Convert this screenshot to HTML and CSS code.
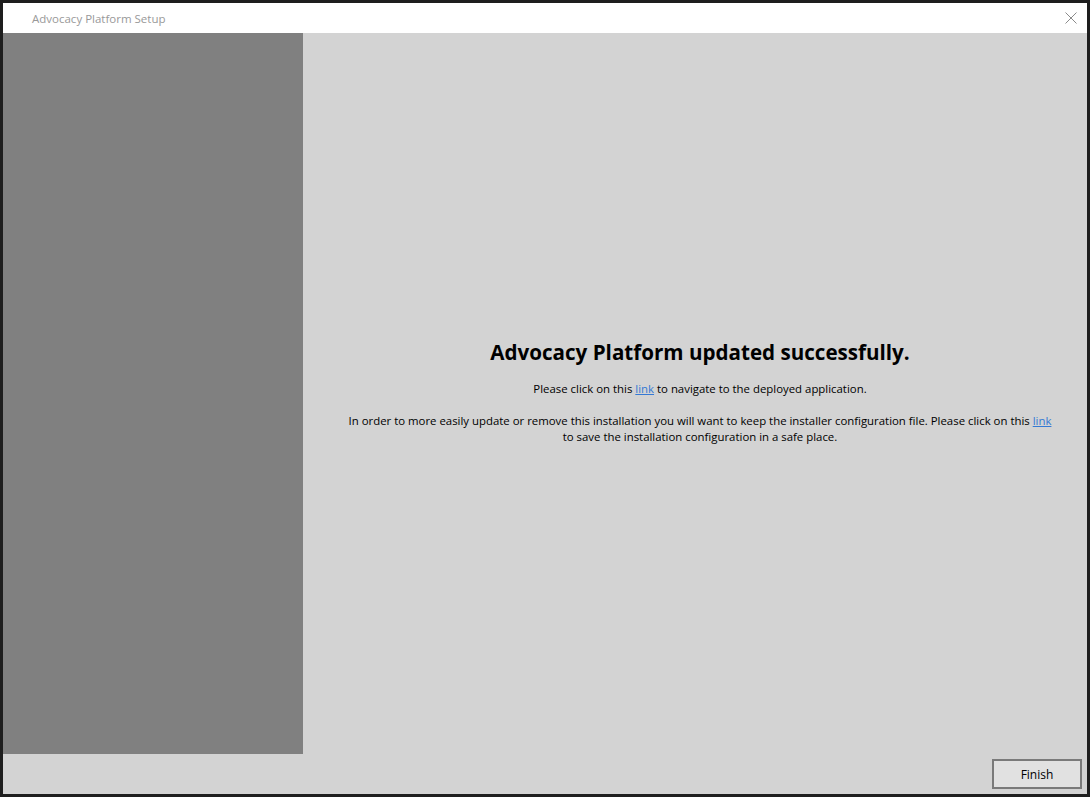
FILE: index.html
```html
<!DOCTYPE html>
<html lang="en">
<head>
<meta charset="utf-8">
<title>Advocacy Platform Setup</title>
<link rel="stylesheet" href="styles.css">
</head>
<body>
<div class="window">
  <div class="titlebar">
    <span class="title">Advocacy Platform Setup</span>
    <svg class="close" width="12" height="12" viewBox="0 0 12 12" aria-hidden="true">
      <path d="M0.5 0.5 L11.5 11.5 M11.5 0.5 L0.5 11.5" stroke="#8a8a8a" stroke-width="1" fill="none"/>
    </svg>
  </div>
  <div class="main">
    <div class="sidebar"></div>
    <div class="content">
      <div class="message">
        <h1 class="heading">Advocacy Platform updated successfully.</h1>
        <p class="para">Please click on this <a href="#" class="link">link</a> to navigate to the deployed application.</p>
        <p class="para">In order to more easily update or remove this installation you will want to keep the installer configuration file. Please click on this <a href="#" class="link">link</a><br>to save the installation configuration in a safe place.</p>
      </div>
    </div>
  </div>
  <div class="footer">
    <button class="btn">Finish</button>
  </div>
</div>
</body>
</html>
```

FILE: styles.css
```css
html, body {
  margin: 0;
  padding: 0;
}
body {
  background: #1e1e1e;
  width: 1090px;
  height: 797px;
  padding: 3px;
  box-sizing: border-box;
  font-family: "Open Sans", "Noto Sans", sans-serif;
  overflow: hidden;
}
.window {
  width: 1084px;
  height: 791px;
  display: flex;
  flex-direction: column;
  background: #d3d3d3;
}
.titlebar {
  height: 30px;
  background: #ffffff;
  display: flex;
  align-items: center;
  justify-content: space-between;
  padding: 0 10px 0 29px;
  flex: none;
}
.title {
  font-size: 11.5px;
  color: #999999;
}
.close {
  display: block;
}
.main {
  flex: 1;
  display: flex;
  min-height: 0;
}
.sidebar {
  width: 300px;
  background: #808080;
  flex: none;
}
.content {
  flex: 1;
  display: flex;
  align-items: center;
  justify-content: center;
  padding-left: 10px;
}
.message {
  text-align: center;
  color: #000;
}
.heading {
  font-size: 20.6px;
  font-weight: 700;
  margin: 0 0 19px 0;
  line-height: 20px;
}
.para {
  font-size: 11.4px;
  line-height: 16px;
  margin: 0 0 16px 0;
}
.para:last-child {
  margin-bottom: 0;
}
.link {
  color: #3579d4;
  text-decoration: underline;
}
.footer {
  height: 40px;
  flex: none;
  display: flex;
  justify-content: flex-end;
  align-items: center;
  padding-right: 5px;
}
.btn {
  width: 90px;
  height: 30px;
  background: #e1e1e1;
  border: 2px solid #7a7a7a;
  font-family: "Open Sans", "Noto Sans", sans-serif;
  font-size: 12px;
  color: #000;
  padding: 0;
}
```
